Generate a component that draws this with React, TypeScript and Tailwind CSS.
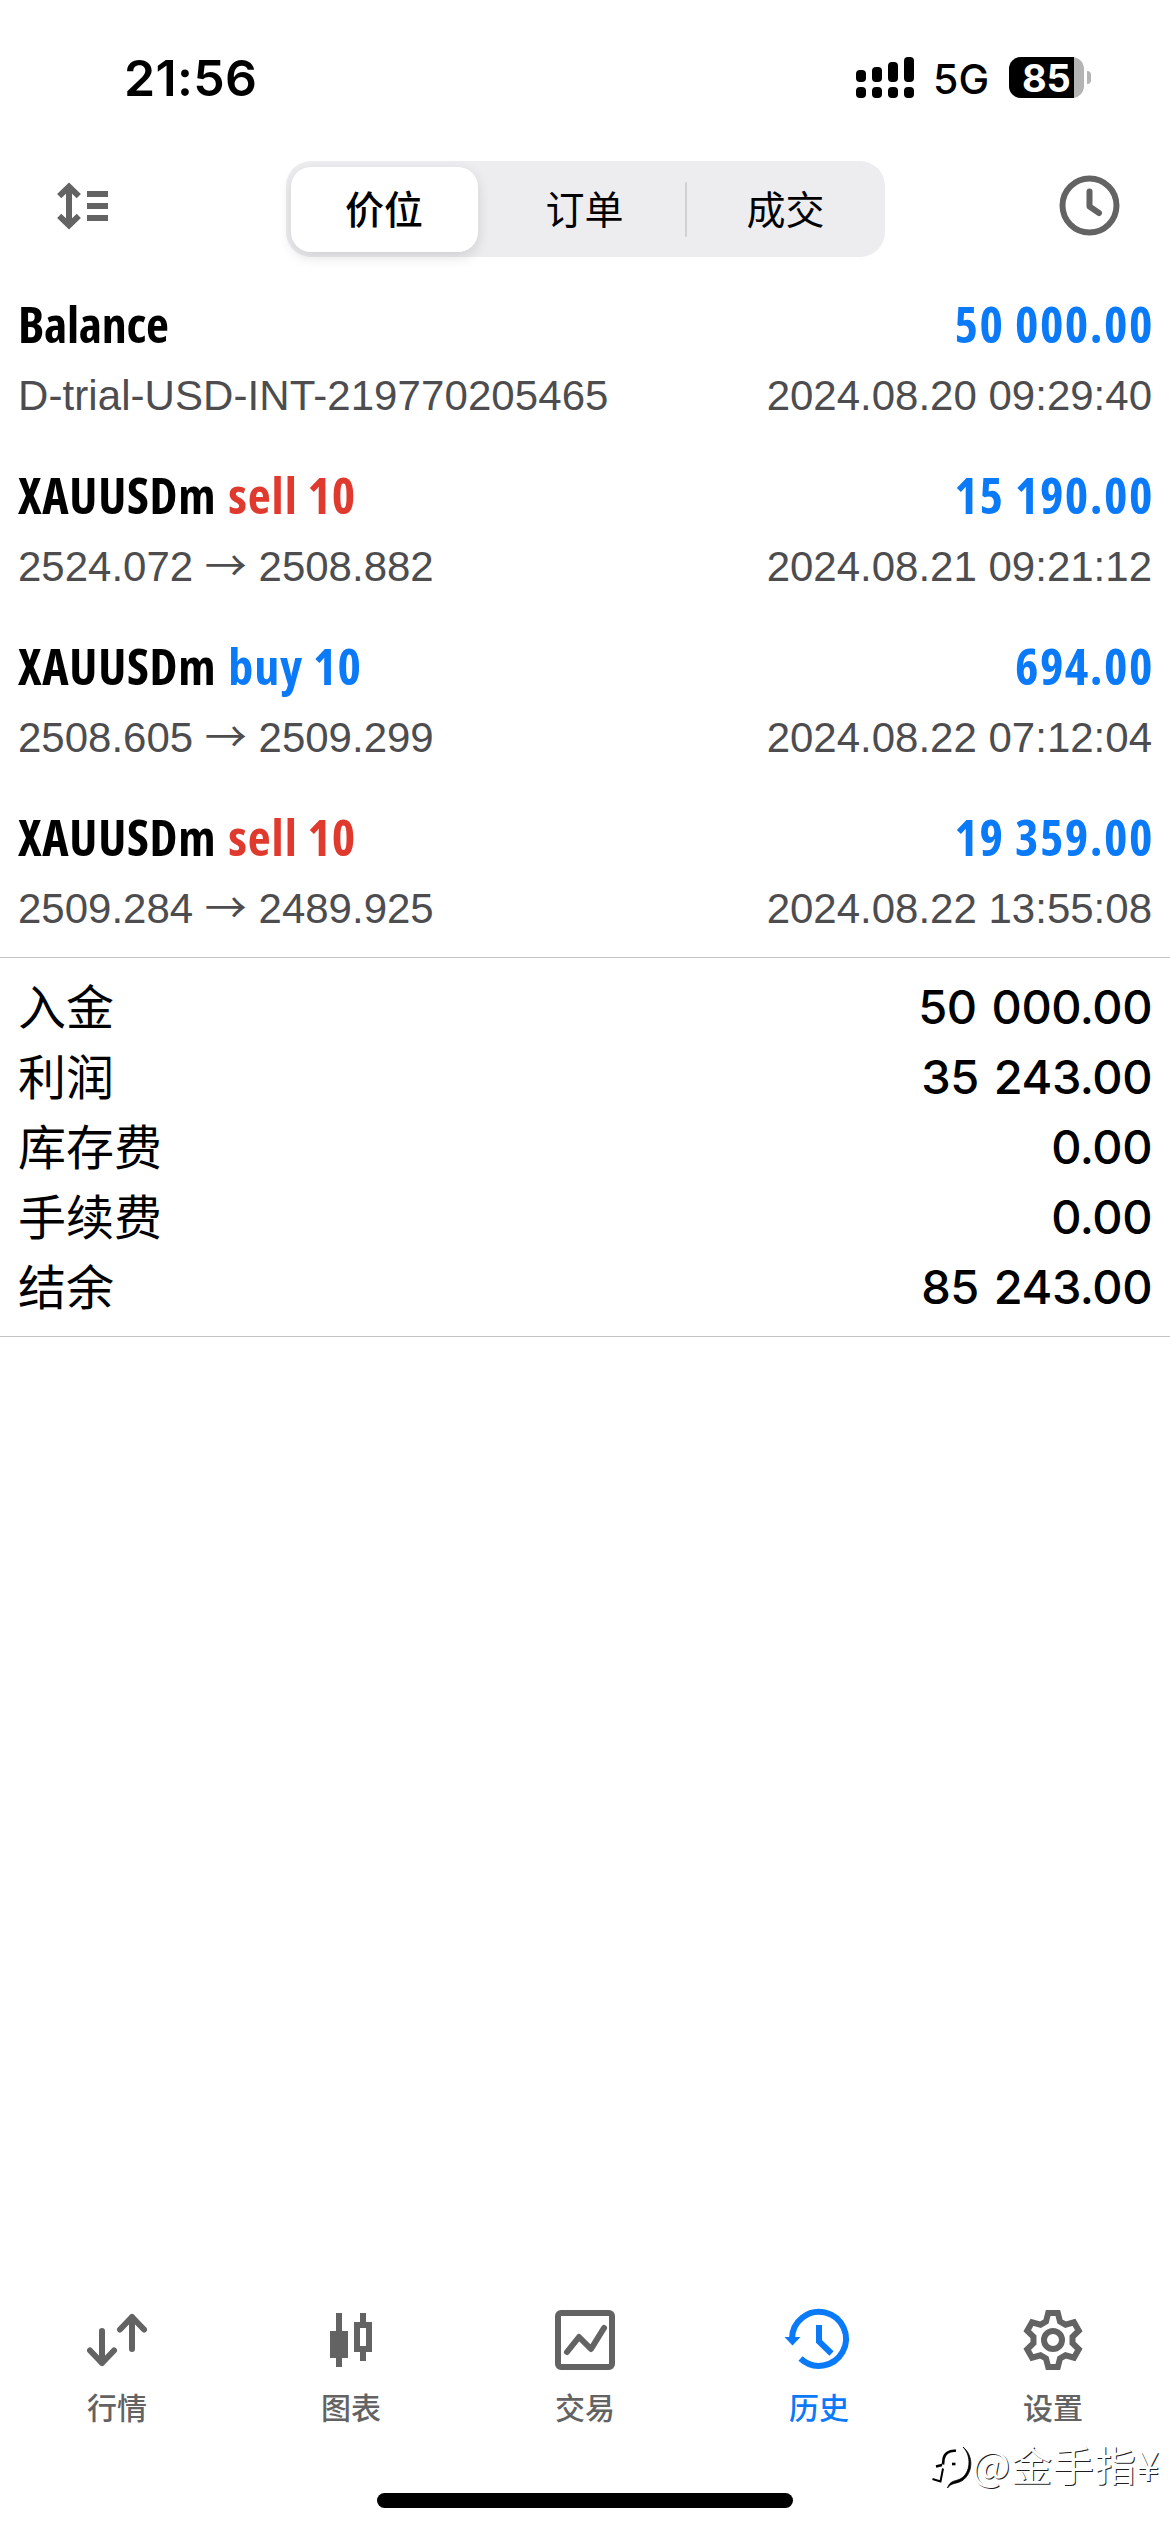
import type { ReactNode } from "react";

type Deal = {
  title: string;
  action?: string;
  actionColor?: string;
  detail: ReactNode;
  profit: string;
  time: string;
};

function PriceMove({ from, to }: { from: string; to: string }) {
  return (
    <span>
      {from} <span className="font-['Noto_Sans_CJK_SC',sans-serif] leading-none">→</span> {to}
    </span>
  );
}

const deals: Deal[] = [
  {
    title: "Balance",
    detail: <span className="tracking-[0.08px]">D-trial-USD-INT-219770205465</span>,
    profit: "50 000.00",
    time: "2024.08.20 09:29:40",
  },
  {
    title: "XAUUSDm",
    action: "sell 10",
    actionColor: "text-[#e03a2e]",
    detail: <PriceMove from="2524.072" to="2508.882" />,
    profit: "15 190.00",
    time: "2024.08.21 09:21:12",
  },
  {
    title: "XAUUSDm",
    action: "buy 10",
    actionColor: "text-[#0a7af8]",
    detail: <PriceMove from="2508.605" to="2509.299" />,
    profit: "694.00",
    time: "2024.08.22 07:12:04",
  },
  {
    title: "XAUUSDm",
    action: "sell 10",
    actionColor: "text-[#e03a2e]",
    detail: <PriceMove from="2509.284" to="2489.925" />,
    profit: "19 359.00",
    time: "2024.08.22 13:55:08",
  },
];

const totals: [string, string][] = [
  ["入金", "50 000.00"],
  ["利润", "35 243.00"],
  ["库存费", "0.00"],
  ["手续费", "0.00"],
  ["结余", "85 243.00"],
];

function StatusBar() {
  return (
    <div className="flex h-[144px] items-start justify-between pl-[124px] pr-[79px] pt-[53px] font-['Inter',sans-serif] text-black">
      <span className="text-[50px] font-semibold leading-[50px] tracking-[0.3px]">21:56</span>
      <div className="flex items-start pt-1">
        <svg width="58" height="41" viewBox="0 0 58 41">
          <rect x="0" y="13" width="10" height="12" rx="4" />
          <rect x="16" y="10" width="10" height="15" rx="4" />
          <rect x="32" y="5" width="10" height="20" rx="4" />
          <rect x="48" y="0" width="10" height="25" rx="4" />
          <rect x="0" y="30" width="10" height="11" rx="4" />
          <rect x="16" y="30" width="10" height="11" rx="4" />
          <rect x="32" y="30" width="10" height="11" rx="4" />
          <rect x="48" y="30" width="10" height="11" rx="4" />
        </svg>
        <span className="ml-[19px] mt-0.5 w-[76px] text-[41px] font-medium leading-[41px] tracking-[0.2px]">5G</span>
        <div className="flex h-[41px] w-[75px] rounded-[12px] bg-[#b4b4b4]">
          <span className="h-[41px] w-[65px] rounded-l-[12px] bg-black pl-[13px] text-[38px] font-bold leading-[42px] tracking-[-0.2px] text-white">
            85
          </span>
        </div>
        <div className="ml-[3px] mt-[14px] h-[13px] w-[4px] rounded-r-full bg-[#b4b4b4]" />
      </div>
    </div>
  );
}

function Toolbar() {
  return (
    <div className="flex h-[140px] items-start justify-between pl-[57px] pr-[50px] pt-[17px] text-[#636363]">
      <svg className="mt-[21px]" width="51" height="48" viewBox="0 0 51 48" fill="none" stroke="currentColor" strokeWidth="6">
        <path d="M12 4V44M2.2 14.2L12 4.7L21.8 14.2M2.2 33.8L12 43.3L21.8 33.8" />
        <path d="M30 12H51M30 24H51M30 36H51" />
      </svg>
      <div className="ml-[3px] flex h-[96px] w-[599px] items-center rounded-[25px] bg-[#ededef] font-['Noto_Sans_CJK_SC',sans-serif] text-[39px] text-black">
        <div className="ml-[5px] h-[85px] w-[187px] rounded-[20px] bg-white text-center font-medium leading-[80px] shadow-[0_5px_14px_rgba(0,0,0,0.12)]">
          价位
        </div>
        <div className="ml-[7px] h-[85px] w-[200px] text-center leading-[80px]">订单</div>
        <div className="h-[55px] w-[2px] rounded-full bg-[#d1d1d4]" />
        <div className="h-[85px] w-[198px] text-center leading-[80px]">成交</div>
      </div>
      <svg className="mt-[14px]" width="61" height="61" viewBox="-30.5 -30.5 61 61" fill="none" stroke="currentColor" strokeWidth="6">
        <circle r="27" />
        <path d="M0 -14V1L9.5 7.5" strokeLinecap="round" strokeLinejoin="round" />
      </svg>
    </div>
  );
}

function DealRow({ deal }: { deal: Deal }) {
  return (
    <div className="px-[18px]">
      <div className="flex justify-between font-['Open_Sans',sans-serif] text-[50px] font-bold leading-[80px] [font-stretch:75%]">
        <span className={deal.action ? "tracking-[0.7px] text-black" : "tracking-[-0.3px] text-black"}>
          {deal.title}
          {deal.action && <span className={`ml-[12px] tracking-[0.9px] ${deal.actionColor}`}>{deal.action}</span>}
        </span>
        <span className="mr-[-2px] tracking-[1.5px] text-[#0a7af8]">{deal.profit}</span>
      </div>
      <div className="flex h-[64px] justify-between font-['Liberation_Sans',sans-serif] text-[42px] leading-[64px] text-[#4d4d50]">
        <span>{deal.detail}</span>
        <span>{deal.time}</span>
      </div>
    </div>
  );
}

function QuotesIcon() {
  return (
    <svg width="60" height="60" viewBox="0 0 60 60" fill="none" stroke="currentColor" strokeWidth="6" strokeLinecap="round" strokeLinejoin="round">
      <path d="M15 21V53M3 40.5L15 53L27 40.5M45 39V7M33 19.500L45 7L57 19.500" />
    </svg>
  );
}

function ChartIcon() {
  return (
    <svg width="60" height="60" viewBox="0 0 60 60" fill="currentColor" shapeRendering="crispEdges">
      <path d="M15 3H21V21H27V48H21V57H15V48H9V21H15Z" />
      <path fillRule="evenodd" d="M39 3H45V12H51V42H45V51H39V42H33V12H39ZM39 18V36H45V18Z" />
    </svg>
  );
}

function TradeIcon() {
  return (
    <svg width="60" height="60" viewBox="0 0 60 60" fill="none" stroke="currentColor" strokeWidth="6" strokeLinecap="round" strokeLinejoin="round">
      <rect x="3" y="3" width="54" height="54" rx="3" />
      <path d="M12 42L24 27L36 39L49 18" />
    </svg>
  );
}

function HistoryIcon() {
  return (
    <svg className="overflow-visible" width="60" height="60" viewBox="0 0 60 60" fill="none" stroke="currentColor" strokeWidth="6">
      <path d="M3 29A27 27 0 1 1 11.500 48.500" />
      <path d="M-4.500 27H11.500L3.500 35.500Z" fill="currentColor" stroke="none" />
      <path d="M30 15V31.500L42.500 43.500" />
    </svg>
  );
}

function SettingsIcon() {
  const teeth = [0, 60, 120, 180, 240, 300].flatMap((deg) => {
    const a = (deg * Math.PI) / 180;
    const corners = [[-7, -18.5], [-4.8, -27], [4.8, -27], [7, -18.5]];
    return corners.map(([x, y]) => `${x * Math.cos(a) - y * Math.sin(a)},${x * Math.sin(a) + y * Math.cos(a)}`);
  });
  return (
    <svg width="60" height="60" viewBox="-30 -30 60 60" fill="none" stroke="currentColor" strokeWidth="6">
      <polygon points={teeth.join(" ")} />
      <circle r="9" />
    </svg>
  );
}

const tabs = [
  { label: "行情", icon: <QuotesIcon /> },
  { label: "图表", icon: <ChartIcon /> },
  { label: "交易", icon: <TradeIcon /> },
  { label: "历史", icon: <HistoryIcon />, active: true },
  { label: "设置", icon: <SettingsIcon /> },
];

function Watermark() {
  return (
    <div className="absolute bottom-[40px] right-[10px] flex items-start">
      <svg className="mt-[4px] overflow-visible" width="40" height="50" viewBox="0 0 40 50" fill="none" stroke="#000" strokeWidth="2.600">
        <path d="M25 8.800C18 8 13 12 12.500 17.500L12 22.500M5 24.500L11 23" />
        <path d="M12 26.500L9.500 39.500L1.500 37" strokeWidth="2" />
        <path d="M32 5C41 14 39.500 31 30 36.500C25 39.500 19 38 16.500 46C20 40.500 26 42 31.500 38.500C42 31 43 14 32 5Z" fill="#000" strokeWidth="0.800" />
        <path d="M21 22H24.500" />
      </svg>
      <span className="font-['Noto_Sans_CJK_SC',sans-serif] text-[41px] leading-[50px] tracking-[0.8px] text-white [text-shadow:1px_1px_0_rgba(0,0,0,0.9)]">
        @金手指¥
      </span>
    </div>
  );
}

export default function App() {
  return (
    <div className="relative flex h-[2532px] w-[1170px] flex-col overflow-hidden bg-white">
      <StatusBar />
      <Toolbar />
      <div className="flex flex-col gap-[27px] border-b border-[#c4c4c6] pb-[16px]">
        {deals.map((deal) => (
          <DealRow key={deal.time} deal={deal} />
        ))}
      </div>
      <div className="border-b border-[#c4c4c6] px-[18px] py-[14px] text-[48px] leading-[70px] text-black">
        {totals.map(([label, value]) => (
          <div key={label} className="flex h-[70px] justify-between">
            <span className="-mt-[3px] font-['Noto_Sans_CJK_SC',sans-serif]">{label}</span>
            <span className="font-['Inter',sans-serif] text-[47px] font-medium tracking-[-0.5px] [word-spacing:3px]">{value}</span>
          </div>
        ))}
      </div>
      <nav className="mt-auto grid h-[183px] grid-cols-5">
        {tabs.map((tab) => (
          <div
            key={tab.label}
            className={`flex flex-col items-center ${tab.active ? "text-[#0a7af8]" : "text-[#636363]"}`}
          >
            {tab.icon}
            <span className="mt-[16px] font-['Noto_Sans_CJK_SC',sans-serif] text-[30px] font-medium leading-[40px]">
              {tab.label}
            </span>
          </div>
        ))}
      </nav>
      <div className="mb-[24px] h-[15px] w-[416px] self-center rounded-full bg-black" />
      <Watermark />
    </div>
  );
}
